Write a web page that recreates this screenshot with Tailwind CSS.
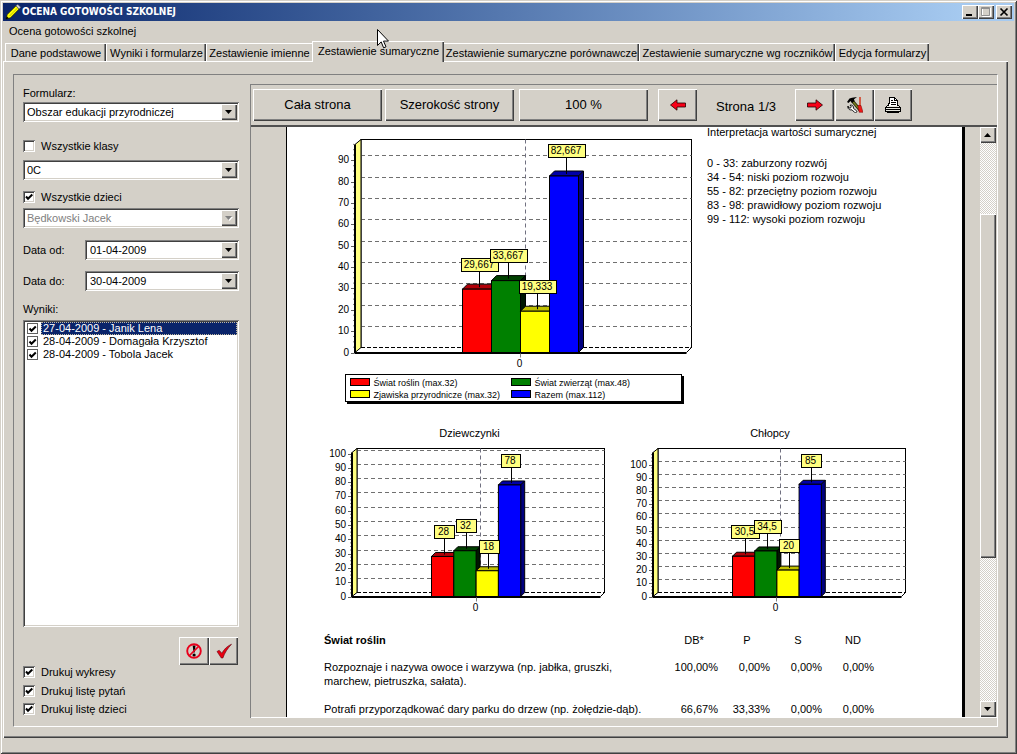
<!DOCTYPE html>
<html lang="pl">
<head>
<meta charset="utf-8">
<title>OCENA GOTOWOŚCI SZKOLNEJ</title>
<script src="https://cdn.jsdelivr.net/npm/@tailwindcss/browser@4"></script>
</head>
<body class="bg-[#d4d0c8] font-['Liberation_Sans',Arial,sans-serif] text-[11px] leading-[14px] text-black">
<div class="relative flex h-screen flex-col overflow-hidden bg-[#d4d0c8] p-[3px] shadow-[inset_1px_1px_#d4d0c8,inset_-1px_-1px_#404040,inset_2px_2px_#fff,inset_-2px_-2px_#808080]">

  <!-- Title bar -->
  <header class="flex h-[18px] shrink-0 items-center bg-linear-to-r from-[#0a246a] to-[#a6caf0] to-95% pr-[2px] pl-[2px] text-white">
    <svg class="h-4 w-4" viewBox="0 0 16 16"><path d="M1 15l1.200-4.500L11 1.800l3.200 3.200L5.500 13.800z" fill="#ff0" stroke="#1a1a00" stroke-width=".7"/><path d="M4.500 12L12.500 4" stroke="#a8a800" stroke-width=".7"/><path d="M11 1.800L12.800.4l2.800 2.800L14.200 5z" fill="#d8d8d8" stroke="#666" stroke-width=".6"/><path d="M.8 15.200l1-3 2 2z" fill="#000"/></svg>
    <h1 class="ml-[1px] grow font-['DejaVu_Sans_Condensed','DejaVu_Sans',sans-serif] text-[10px] font-bold">OCENA GOTOWOŚCI SZKOLNEJ</h1>
    <button aria-label="Minimalizuj" class="flex h-[14px] w-4 items-center justify-center bg-[#d4d0c8] shadow-[inset_1px_1px_#fff,inset_-1px_-1px_#404040,inset_-2px_-2px_#808080]"><svg class="h-[14px] w-4" viewBox="0 0 16 14"><path d="M4 9h6v2H4z"/></svg></button>
    <button aria-label="Maksymalizuj" disabled class="flex h-[14px] w-4 items-center justify-center bg-[#d4d0c8] shadow-[inset_1px_1px_#fff,inset_-1px_-1px_#404040,inset_-2px_-2px_#808080]"><svg class="h-[14px] w-4" viewBox="0 0 16 14"><path d="M4.500 3v8.500h8V3M4 3.500h9" fill="none" stroke="#fff"/><path d="M3.500 2.500h8v8h-8zM3 3.500h9" fill="none" stroke="#909090"/></svg></button>
    <button aria-label="Zamknij" class="ml-[2px] flex h-[14px] w-4 items-center justify-center bg-[#d4d0c8] shadow-[inset_1px_1px_#fff,inset_-1px_-1px_#404040,inset_-2px_-2px_#808080]"><svg class="h-[14px] w-4" viewBox="0 0 16 14"><path d="M4.500 3.500l7 7M11.500 3.500l-7 7" stroke="#000" stroke-width="1.700"/></svg></button>
  </header>

  <!-- Menu -->
  <nav class="flex h-5 shrink-0 items-center pl-[6px]"><button>Ocena gotowości szkolnej</button></nav>

  <!-- Tabs -->
  <div role="tablist" class="relative z-10 -mb-px flex h-[21px] shrink-0 items-end pl-[2px] whitespace-nowrap">
    <button role="tab" class="mb-px h-[18px] w-[101px] border-t border-l border-white pt-px shadow-[inset_-1px_0_#404040,inset_-2px_0_#808080]">Dane podstawowe</button>
    <button role="tab" class="mb-px h-[18px] w-[100px] border-t border-l border-white pt-px shadow-[inset_-1px_0_#404040,inset_-2px_0_#808080]">Wyniki i formularze</button>
    <button role="tab" class="mb-px h-[18px] w-[106px] border-t border-l border-white pt-px">Zestawienie imienne</button>
    <button role="tab" aria-selected="true" class="h-[21px] w-[132px] border-t border-l border-white bg-[#d4d0c8] pb-[2px] shadow-[inset_-1px_0_#404040,inset_-2px_0_#808080]">Zestawienie sumaryczne</button>
    <button role="tab" class="mb-px h-[18px] w-[195px] border-t border-white pt-px shadow-[inset_-1px_0_#404040,inset_-2px_0_#808080]">Zestawienie sumaryczne porównawcze</button>
    <button role="tab" class="mb-px h-[18px] w-[196px] border-t border-l border-white pt-px shadow-[inset_-1px_0_#404040,inset_-2px_0_#808080]">Zestawienie sumaryczne wg roczników</button>
    <button role="tab" class="mb-px h-[18px] w-[94px] border-t border-l border-white pt-px shadow-[inset_-1px_0_#404040,inset_-2px_0_#808080]">Edycja formularzy</button>
  </div>

  <main class="mr-[6px] mb-[13px] flex min-h-0 grow bg-[#d4d0c8] px-[10px] pt-[13px] pb-[11px] shadow-[inset_1px_1px_#fff,inset_-1px_-1px_#404040,inset_-2px_-2px_#808080]">
    <div class="flex min-w-0 grow border border-t-[#808080] border-r-white border-b-white border-l-[#808080]">

      <!-- Filters -->
      <form class="flex w-[236px] shrink-0 flex-col pt-[11px] pr-[11px] pb-[10px] pl-[9px]">
        <label for="form" class="mb-[2px]">Formularz:</label>
        <div class="relative">
          <select id="form" class="block h-5 w-full appearance-none bg-white pl-[4px] shadow-[inset_1px_1px_#808080,inset_-1px_-1px_#fff,inset_2px_2px_#404040,inset_-2px_-2px_#d4d0c8]"><option>Obszar edukacji przyrodniczej</option></select>
          <svg class="pointer-events-none absolute top-[2px] right-[2px] h-4 w-4 bg-[#d4d0c8] shadow-[inset_1px_1px_#fff,inset_-1px_-1px_#404040,inset_-2px_-2px_#808080]" viewBox="0 0 16 16"><path d="M4 6h7L7.500 10z"/></svg>
        </div>
        <label class="mt-[17px] flex items-center gap-[6px]">
          <input type="checkbox" class="h-3 w-3 appearance-none bg-white shadow-[inset_1px_1px_#808080,inset_-1px_-1px_#fff,inset_2px_2px_#404040,inset_-2px_-2px_#d4d0c8]">Wszystkie klasy
        </label>
        <div class="relative mt-[7px]">
          <select aria-label="Klasa" class="block h-5 w-full appearance-none bg-white pl-[4px] shadow-[inset_1px_1px_#808080,inset_-1px_-1px_#fff,inset_2px_2px_#404040,inset_-2px_-2px_#d4d0c8]"><option>0C</option></select>
          <svg class="pointer-events-none absolute top-[2px] right-[2px] h-4 w-4 bg-[#d4d0c8] shadow-[inset_1px_1px_#fff,inset_-1px_-1px_#404040,inset_-2px_-2px_#808080]" viewBox="0 0 16 16"><path d="M4 6h7L7.500 10z"/></svg>
        </div>
        <label class="relative mt-[10px] flex items-center gap-[6px]">
          <input type="checkbox" checked class="h-3 w-3 appearance-none bg-white shadow-[inset_1px_1px_#808080,inset_-1px_-1px_#fff,inset_2px_2px_#404040,inset_-2px_-2px_#d4d0c8]">Wszystkie dzieci
          <svg class="pointer-events-none absolute left-0 h-3 w-3" viewBox="0 0 12 12"><path d="M3 5.500l2 2.200L9.300 3.500" fill="none" stroke="#000" stroke-width="2"/></svg>
        </label>
        <div class="relative mt-[4px]">
          <select aria-label="Dziecko" disabled class="block h-5 w-full appearance-none bg-white pl-[4px] text-[#808080] opacity-100 shadow-[inset_1px_1px_#808080,inset_-1px_-1px_#fff,inset_2px_2px_#404040,inset_-2px_-2px_#d4d0c8]"><option>Będkowski Jacek</option></select>
          <svg class="pointer-events-none absolute top-[2px] right-[2px] h-4 w-4 bg-[#d4d0c8] shadow-[inset_1px_1px_#fff,inset_-1px_-1px_#404040,inset_-2px_-2px_#808080]" viewBox="0 0 16 16"><path d="M5 7h7L8.500 11z" fill="#fff"/><path d="M4 6h7L7.500 10z" fill="#808080"/></svg>
        </div>
        <div class="mt-3 flex items-center">
          <label for="from" class="w-[62px]">Data od:</label>
          <div class="relative grow">
            <select id="from" class="block h-5 w-full appearance-none bg-white pl-[5px] shadow-[inset_1px_1px_#808080,inset_-1px_-1px_#fff,inset_2px_2px_#404040,inset_-2px_-2px_#d4d0c8]"><option>01-04-2009</option></select>
            <svg class="pointer-events-none absolute top-[2px] right-[2px] h-4 w-4 bg-[#d4d0c8] shadow-[inset_1px_1px_#fff,inset_-1px_-1px_#404040,inset_-2px_-2px_#808080]" viewBox="0 0 16 16"><path d="M4 6h7L7.500 10z"/></svg>
          </div>
        </div>
        <div class="mt-[11px] flex items-center">
          <label for="to" class="w-[62px]">Data do:</label>
          <div class="relative grow">
            <select id="to" class="block h-5 w-full appearance-none bg-white pl-[5px] shadow-[inset_1px_1px_#808080,inset_-1px_-1px_#fff,inset_2px_2px_#404040,inset_-2px_-2px_#d4d0c8]"><option>30-04-2009</option></select>
            <svg class="pointer-events-none absolute top-[2px] right-[2px] h-4 w-4 bg-[#d4d0c8] shadow-[inset_1px_1px_#fff,inset_-1px_-1px_#404040,inset_-2px_-2px_#808080]" viewBox="0 0 16 16"><path d="M4 6h7L7.500 10z"/></svg>
          </div>
        </div>
        <div class="mt-[11px] mb-[4px]">Wyniki:</div>
        <div class="flex grow flex-col bg-white p-[2px] leading-[13px] shadow-[inset_1px_1px_#808080,inset_-1px_-1px_#fff,inset_2px_2px_#404040,inset_-2px_-2px_#d4d0c8]">
          <label class="relative flex h-[13px] items-center pl-[2px]">
            <input type="checkbox" checked class="mr-[3px] h-[11px] w-[11px] appearance-none border border-[#606060] bg-white"><span class="grow bg-[#0a246a] pl-[2px] text-white outline outline-dotted -outline-offset-1 outline-[#c0b8a0]">27-04-2009 - Janik Lena</span>
            <svg class="pointer-events-none absolute left-[2px] h-3 w-3" viewBox="0 0 12 12"><path d="M2.500 5.500l2 2.200L8.800 3.500" fill="none" stroke="#000" stroke-width="2"/></svg>
          </label>
          <label class="relative flex h-[13px] items-center pl-[2px]">
            <input type="checkbox" checked class="mr-[3px] h-[11px] w-[11px] appearance-none border border-[#606060] bg-white"><span class="grow pl-[2px]">28-04-2009 - Domagała Krzysztof</span>
            <svg class="pointer-events-none absolute left-[2px] h-3 w-3" viewBox="0 0 12 12"><path d="M2.500 5.500l2 2.200L8.800 3.500" fill="none" stroke="#000" stroke-width="2"/></svg>
          </label>
          <label class="relative flex h-[13px] items-center pl-[2px]">
            <input type="checkbox" checked class="mr-[3px] h-[11px] w-[11px] appearance-none border border-[#606060] bg-white"><span class="grow pl-[2px]">28-04-2009 - Tobola Jacek</span>
            <svg class="pointer-events-none absolute left-[2px] h-3 w-3" viewBox="0 0 12 12"><path d="M2.500 5.500l2 2.200L8.800 3.500" fill="none" stroke="#000" stroke-width="2"/></svg>
          </label>
        </div>
        <div class="mt-[10px] flex justify-end pr-px">
          <button type="button" aria-label="Odznacz" class="flex h-7 w-[30px] items-center justify-center shadow-[inset_1px_1px_#fff,inset_-1px_-1px_#404040,inset_-2px_-2px_#808080]"><svg class="h-4 w-4" viewBox="0 0 16 16"><path d="M6.700 2.500h2.800L8.700 9.500H7.500z"/><circle cx="8.100" cy="12" r="1.600"/><circle cx="8" cy="8" r="6.800" fill="none" stroke="#e8001c" stroke-width="1.900"/><path d="M3.500 12.500l9-9" stroke="#e8001c" stroke-width="1.700"/></svg></button>
          <button type="button" aria-label="Zaznacz" class="flex h-7 w-[29px] items-center justify-center shadow-[inset_1px_1px_#fff,inset_-1px_-1px_#404040,inset_-2px_-2px_#808080]"><svg class="h-4 w-4" viewBox="0 0 16 16"><path d="M1 8.500l2.200-1.200 2.600 2.900C8 6.500 11 3 15.500 1.200 11.500 5.500 8.700 9.800 6.900 15H5.300z" fill="#e80010" stroke="#600010" stroke-width=".6"/></svg></button>
        </div>
        <label class="relative flex items-center gap-[6px]">
          <input type="checkbox" checked class="h-3 w-3 appearance-none bg-white shadow-[inset_1px_1px_#808080,inset_-1px_-1px_#fff,inset_2px_2px_#404040,inset_-2px_-2px_#d4d0c8]">Drukuj wykresy
          <svg class="pointer-events-none absolute left-0 h-3 w-3" viewBox="0 0 12 12"><path d="M3 5.500l2 2.200L9.300 3.500" fill="none" stroke="#000" stroke-width="2"/></svg>
        </label>
        <label class="relative mt-[5px] flex items-center gap-[6px]">
          <input type="checkbox" checked class="h-3 w-3 appearance-none bg-white shadow-[inset_1px_1px_#808080,inset_-1px_-1px_#fff,inset_2px_2px_#404040,inset_-2px_-2px_#d4d0c8]">Drukuj listę pytań
          <svg class="pointer-events-none absolute left-0 h-3 w-3" viewBox="0 0 12 12"><path d="M3 5.500l2 2.200L9.300 3.500" fill="none" stroke="#000" stroke-width="2"/></svg>
        </label>
        <label class="relative mt-[4px] flex items-center gap-[6px]">
          <input type="checkbox" checked class="h-3 w-3 appearance-none bg-white shadow-[inset_1px_1px_#808080,inset_-1px_-1px_#fff,inset_2px_2px_#404040,inset_-2px_-2px_#d4d0c8]">Drukuj listę dzieci
          <svg class="pointer-events-none absolute left-0 h-3 w-3" viewBox="0 0 12 12"><path d="M3 5.500l2 2.200L9.300 3.500" fill="none" stroke="#000" stroke-width="2"/></svg>
        </label>
      </form>

      <!-- Print preview -->
      <section class="mt-[9px] mb-2 flex min-w-0 grow flex-col border-t border-l border-[#808080]">
        <div class="flex h-10 shrink-0 items-center pl-[2px] text-[13px]">
          <button class="h-8 w-[129px] shadow-[inset_1px_1px_#fff,inset_-1px_-1px_#404040,inset_-2px_-2px_#808080]">Cała strona</button>
          <button class="ml-[3px] h-8 w-[129px] shadow-[inset_1px_1px_#fff,inset_-1px_-1px_#404040,inset_-2px_-2px_#808080]">Szerokość strony</button>
          <button class="ml-[5px] h-8 w-[129px] shadow-[inset_1px_1px_#fff,inset_-1px_-1px_#404040,inset_-2px_-2px_#808080]">100 %</button>
          <button aria-label="Poprzednia strona" class="ml-[10px] flex h-8 w-[39px] items-center justify-center shadow-[inset_1px_1px_#fff,inset_-1px_-1px_#404040,inset_-2px_-2px_#808080]"><svg class="h-3 w-4" viewBox="0 0 16 12"><path d="M.5 6L7 .8V4h8.500v4H7v3.200z" fill="#f80018" stroke="#200" stroke-width=".8"/></svg></button>
          <span class="w-[98px] pt-1 text-center">Strona 1/3</span>
          <button aria-label="Następna strona" class="flex h-8 w-[39px] items-center justify-center shadow-[inset_1px_1px_#fff,inset_-1px_-1px_#404040,inset_-2px_-2px_#808080]"><svg class="h-3 w-4" viewBox="0 0 16 12"><path d="M15.500 6L9 .8V4H.5v4H9v3.200z" fill="#f80018" stroke="#200" stroke-width=".8"/></svg></button>
          <button aria-label="Ustawienia" class="ml-px flex h-8 w-[39px] items-center justify-center shadow-[inset_1px_1px_#fff,inset_-1px_-1px_#404040,inset_-2px_-2px_#808080]"><svg class="h-4 w-4" viewBox="0 0 16 16"><path d="M13 0v9" stroke="#d02000" stroke-width="1.300"/><path d="M5 3.500l8 9.500" stroke="#20200a" stroke-width="3.200"/><path d="M5 3.500l8 9.500" stroke="#7a8020" stroke-width="1.600"/><path d="M0 5L2.500 1.500 5 .8 10 0 7 2.300 7.500 4 5.200 6 3.500 4 1.500 6z"/><path d="M10.800 8.500H14l2 6.800h-3.800z" fill="#f01818" stroke="#700" stroke-width=".5"/><path d="M1 9l.8 2 1.700.1.700-1.500-1.100-1.500c2.200-.3 3.800 1 3.300 3.200l3.200 2.500c.9 1.200-.9 2.600-2 1.600L5 12.800C2.800 13.400.2 11.800 1 9z" fill="#fff" stroke="#000" stroke-width=".9"/></svg></button>
          <button aria-label="Drukuj" class="flex h-8 w-[38px] items-center justify-center shadow-[inset_1px_1px_#fff,inset_-1px_-1px_#404040,inset_-2px_-2px_#808080]"><svg class="h-4 w-4" viewBox="0 0 16 16" shape-rendering="crispEdges"><path d="M3.500 9.500V6.500h1V.5h5l3 3v6z" fill="#fff" stroke="#000"/><path d="M9.500.5v3h3M6 3.500h2M6 5.500h5M6 7.500h5" fill="none" stroke="#000"/><path d="M.5 10.500l2-2h11l2 2v4h-15z" fill="#e8e8e0" stroke="#000"/><path d="M4 8.500h8" stroke="#fff"/><path d="M1 10.500h14M1 12.500h14M2 15.500h12" stroke="#000"/></svg></button>
        </div>
        <div class="flex min-h-0 grow border-t-2 border-b border-t-[#505050] border-b-white">
          <div class="ml-[35px] min-w-0 grow overflow-hidden border-r-[3px] border-l border-black bg-white">
            <div class="flex">
              <svg id="total" class="ml-[38px] h-[283px] w-[380px] shrink-0" viewBox="325 127 380 283" role="img" aria-label="Wykres zbiorczy"></svg>
              <div class="-mt-[2px] ml-[2px] leading-[14px] whitespace-nowrap">
                <p>Interpretacja wartości sumarycznej</p>
                <p class="mt-[17px]">0 - 33: zaburzony rozwój</p>
                <p>34 - 54: niski poziom rozwoju</p>
                <p>55 - 82: przeciętny poziom rozwoju</p>
                <p>83 - 98: prawidłowy poziom rozwoju</p>
                <p>99 - 112: wysoki poziom rozwoju</p>
              </div>
            </div>
            <div class="mt-4 flex pl-[38px]">
              <figure class="w-[295px]"><figcaption class="pr-[6px] text-center">Dziewczynki</figcaption>
                <svg id="girls" class="h-[175px] w-[295px]" viewBox="325 440 295 175" role="img" aria-label="Dziewczynki"></svg></figure>
              <figure class="w-[300px]"><figcaption class="text-center">Chłopcy</figcaption>
                <svg id="boys" class="h-[175px] w-[300px]" viewBox="620 440 300 175" role="img" aria-label="Chłopcy"></svg></figure>
            </div>
            <table class="mt-[18px] ml-[37px] table-fixed border-collapse">
              <colgroup><col class="w-[342px]"><col class="w-[52px]"><col class="w-[52px]"><col class="w-[52px]"><col class="w-[52px]"></colgroup>
              <thead><tr class="h-[14px]"><th class="text-left font-bold">Świat roślin</th><th class="pl-[4px] font-normal">DB*</th><th class="pl-[6px] font-normal">P</th><th class="pl-[4px] font-normal">S</th><th class="pl-[10px] font-normal">ND</th></tr></thead>
              <tbody class="text-right align-top">
                <tr><td class="pt-[13px] text-left">Rozpoznaje i nazywa owoce i warzywa (np. jabłka, gruszki,<br>marchew, pietruszka, sałata).</td><td class="pt-[13px]">100,00%</td><td class="pt-[13px]">0,00%</td><td class="pt-[13px]">0,00%</td><td class="pt-[13px]">0,00%</td></tr>
                <tr><td class="pt-[14px] text-left">Potrafi przyporządkować dary parku do drzew (np. żołędzie-dąb).</td><td class="pt-[14px]">66,67%</td><td class="pt-[14px]">33,33%</td><td class="pt-[14px]">0,00%</td><td class="pt-[14px]">0,00%</td></tr>
              </tbody>
            </table>
          </div>
          <div class="mr-px ml-[15px] flex w-4 shrink-0 flex-col bg-[repeating-conic-gradient(#d4d0c8_0_25%,#fff_0_50%)] bg-[length:2px_2px]">
            <button aria-label="W górę" class="h-4 shrink-0 bg-[#d4d0c8] shadow-[inset_1px_1px_#fff,inset_-1px_-1px_#404040,inset_-2px_-2px_#808080]"><svg class="h-4 w-4" viewBox="0 0 16 16"><path d="M4 10h7L7.500 6z"/></svg></button>
            <div class="grow-[71]"></div>
            <div class="grow-[344] bg-[#d4d0c8] shadow-[inset_1px_1px_#fff,inset_-1px_-1px_#404040,inset_-2px_-2px_#808080]"></div>
            <div class="grow-[143]"></div>
            <button aria-label="W dół" class="h-4 shrink-0 bg-[#d4d0c8] shadow-[inset_1px_1px_#fff,inset_-1px_-1px_#404040,inset_-2px_-2px_#808080]"><svg class="h-4 w-4" viewBox="0 0 16 16"><path d="M4 6h7L7.500 10z"/></svg></button>
          </div>
        </div>
      </section>
    </div>
  </main>

  <!-- Mouse pointer -->
  <svg class="pointer-events-none absolute top-[29px] left-[377px] z-20 h-5 w-3" viewBox="0 0 12 20"><path d="M.5.5v16l3.700-3.600 2.400 5.900 2.400-1-2.500-5.700h5z" fill="#fff" stroke="#000"/></svg>
</div>

<script>
const COLORS = [['#f00', '#b00008', '#800000'], ['#008000', '#004000', '#001800'], ['#ff0', '#bfbf00', '#808000'], ['#00f', '#0000a8', '#000080']];

// Draws a 3-D bar chart: x/y are the front plane, the back wall is shifted by the depth d.
function chart(id, c) {
  const Y = v => c.y0 - v * c.unit, d = c.d, back = c.x0 + d + 1;
  let s = '';
  const line = (x1, y1, x2, y2, extra) => `<line x1="${x1}" y1="${y1}" x2="${x2}" y2="${y2}" ${extra}/>`;
  const text = (x, y, t, anchor, size = 10) => `<text x="${x}" y="${y}" font-size="${size}" text-anchor="${anchor}">${t}</text>`;
  s += `<rect x="${back}" y="${c.top}" width="${c.right - back}" height="${c.y0 - d - c.top}" fill="#fff" stroke="#000"/>`;
  s += line(back + 1, c.y0 - d, c.right - 1, c.y0 - d, 'stroke="#fff"') + line(back, c.y0 - d, c.right, c.y0 - d, 'stroke="#000" stroke-dasharray="4 2"');
  for (let v = 10; v <= c.max; v += 10) s += line(back, Math.round(Y(v) - d) + .5, c.right, Math.round(Y(v) - d) + .5, 'stroke="#707070" stroke-dasharray="4 3"');
  s += line(c.mid + d, c.top, c.mid + d, c.y0 - d, 'stroke="#707080" stroke-dasharray="4 3"');
  s += `<path d="M${c.x0} ${c.top + d}L${back} ${c.top}V${c.y0 - d}L${c.x0} ${c.y0}z" fill="#ffff80" stroke="#000"/>`;
  s += line(c.x0, c.top + d, c.x0, c.y0 + 1, 'stroke="#000" stroke-width="2"');
  s += line(c.x0, c.y0 + .5, c.right - d, c.y0 + .5, 'stroke="#000" stroke-width="2"') + line(c.right - d, c.y0, c.right, c.y0 - d, 'stroke="#000"');
  for (let v = 0; v <= c.max; v += 10) {
    s += line(c.x0 - 4, Math.round(Y(v)) + .5, c.x0 - 1, Math.round(Y(v)) + .5, 'stroke="#606060"') + text(c.x0 - 6, Math.round(Y(v)) + 3, v, 'end');
    for (let k = 2.5; k < 10 && v + k < c.limit; k += 2.5) s += line(c.x0 - 2, Y(v + k), c.x0 - 1, Y(v + k), 'stroke="#808080"');
  }
  s += line(c.mid, c.y0 + 1, c.mid, c.y0 + 5, 'stroke="#808080"') + text(c.mid - 1, c.y0 + 14, '0', 'middle');
  c.bars.forEach((b, i) => {
    const x = c.bx + i * c.bw, y = Y(b.v), w = c.bw;
    s += `<path d="M${x} ${y}l${d} ${-d}h${w}l${-d} ${d}z" fill="${COLORS[i][1]}" stroke="#000"/>`;
    s += `<path d="M${x + w} ${y}l${d} ${-d}V${c.y0 - d}l${-d} ${d}z" fill="${COLORS[i][2]}" stroke="#000"/>`;
    s += `<rect x="${x}" y="${y}" width="${w}" height="${c.y0 - y}" fill="${COLORS[i][0]}" stroke="#000"/>`;
  });
  c.bars.forEach((b, i) => {
    const cx = c.bx + (i + .5) * c.bw + d / 2;
    s += line(Math.round(cx) - .5, b.y + 13, Math.round(cx) - .5, Y(b.v) - 2, 'stroke="#000"');
    s += `<rect x="${b.x + .5}" y="${b.y + .5}" width="${b.w}" height="13" fill="#ffff80" stroke="#000"/>`;
    s += text(b.x + b.w / 2 - .5, b.y + 10, b.t, 'middle');
  });
  (c.legend || []).forEach((t, i) => {
    if (!i) s += '<rect x="347" y="376" width="337" height="28"/><rect x="345.500" y="374.500" width="336" height="27" fill="#fff" stroke="#000"/>';
    const x = i % 2 ? 511.5 : 350.5, y = i < 2 ? 378.5 : 390.5;
    s += `<rect x="${x}" y="${y}" width="19" height="7" fill="${COLORS[i][0]}" stroke="#000"/>` + text(x + 23, y + 7, t, 'start', 9);
  });
  document.getElementById(id).innerHTML = s;
}

chart('total', { x0: 355, y0: 352.5, unit: 2.135, d: 5, top: 139.5, right: 691.5, max: 90, limit: 98, mid: 520.5, bx: 462.5, bw: 29,
  bars: [{ v: 29.667, t: '29,667', x: 461, y: 258, w: 37 }, { v: 33.667, t: '33,667', x: 490, y: 249, w: 37 }, { v: 19.333, t: '19,333', x: 519, y: 280, w: 37 }, { v: 82.667, t: '82,667', x: 548, y: 144, w: 37 }],
  legend: ['Świat roślin (max.32)', 'Świat zwierząt (max.48)', 'Zjawiska przyrodnicze (max.32)', 'Razem (max.112)'] });
chart('girls', { x0: 352, y0: 596.5, unit: 1.43, d: 4, top: 448.5, right: 604.5, max: 100, limit: 100, mid: 476.5, bx: 431.5, bw: 22.3,
  bars: [{ v: 28, t: '28', x: 434, y: 525, w: 20 }, { v: 32, t: '32', x: 456, y: 519, w: 20 }, { v: 18, t: '18', x: 479, y: 540, w: 20 }, { v: 78, t: '78', x: 501, y: 454, w: 19 }] });
chart('boys', { x0: 653, y0: 596.5, unit: 1.32, d: 4, top: 448.5, right: 905.5, max: 100, limit: 108, mid: 776.5, bx: 732.5, bw: 22.2,
  bars: [{ v: 30.5, t: '30,5', x: 731, y: 525, w: 28 }, { v: 34.5, t: '34,5', x: 754, y: 520, w: 27 }, { v: 20, t: '20', x: 779, y: 539, w: 20 }, { v: 85, t: '85', x: 801, y: 454, w: 20 }] });
</script>
</body>
</html>
